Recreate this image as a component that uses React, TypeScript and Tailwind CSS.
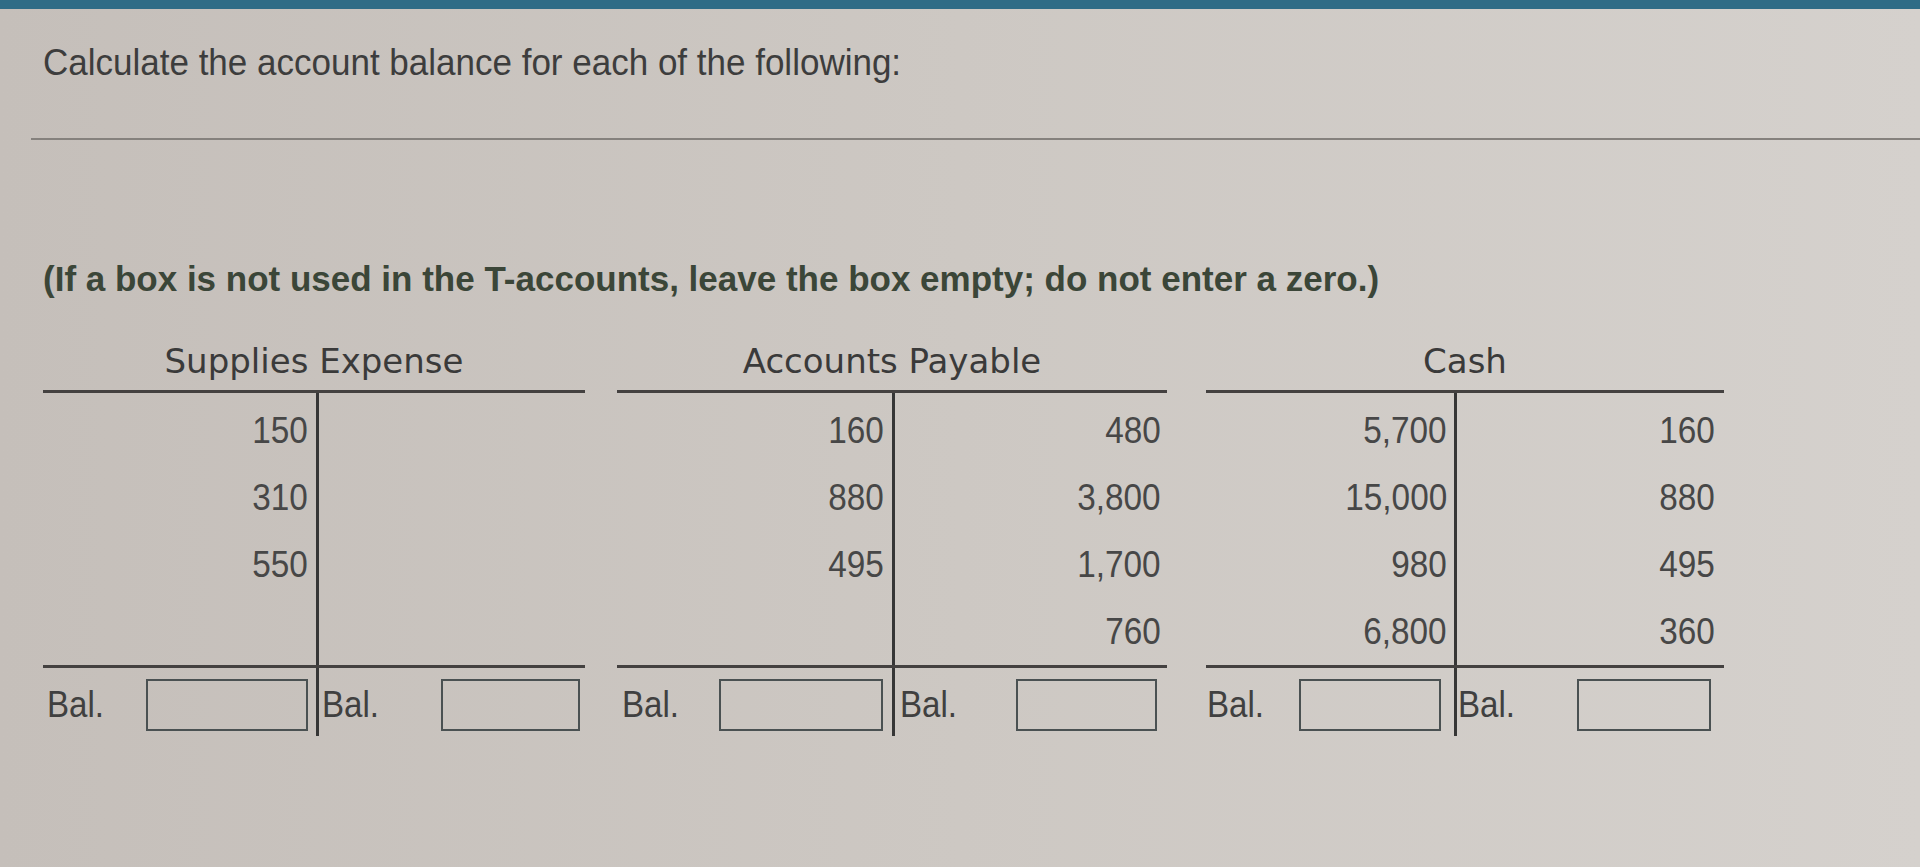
import React from "react";

// T-account layout data, one entry per account
type Side = {
  w: string;
  nums: string[];
  numPr: string;
  balPl: string;
  box: string;
  boxPr: string;
};

type Account = {
  title: string;
  wrap: string;
  left: Side;
  right: Side;
};

const accounts: Account[] = [
  {
    title: "Supplies Expense",
    wrap: "w-[542px]",
    left: { w: "w-[276px]", nums: ["150", "310", "550"], numPr: "pr-[8px]", balPl: "pl-[4px]", box: "w-[162px]", boxPr: "pr-[8px]" },
    right: { w: "w-[266px]", nums: [], numPr: "pr-[7px]", balPl: "pl-[3px]", box: "w-[139px]", boxPr: "pr-[5px]" },
  },
  {
    title: "Accounts Payable",
    wrap: "w-[550px]",
    left: { w: "w-[278px]", nums: ["160", "880", "495"], numPr: "pr-[8px]", balPl: "pl-[5px]", box: "w-[164px]", boxPr: "pr-[9px]" },
    right: { w: "w-[272px]", nums: ["480", "3,800", "1,700", "760"], numPr: "pr-[6px]", balPl: "pl-[5px]", box: "w-[141px]", boxPr: "pr-[10px]" },
  },
  {
    title: "Cash",
    wrap: "w-[518px]",
    left: { w: "w-[251px]", nums: ["5,700", "15,000", "980", "6,800"], numPr: "pr-[7px]", balPl: "pl-[1px]", box: "w-[142px]", boxPr: "pr-[13px]" },
    right: { w: "w-[267px]", nums: ["160", "880", "495", "360"], numPr: "pr-[9px]", balPl: "pl-[1px]", box: "w-[134px]", boxPr: "pr-[13px]" },
  },
];

function Column({ side, divider }: { side: Side; divider: boolean }) {
  const rows = [0, 1, 2, 3];
  return (
    <div className={`${side.w} pt-[4px] ${divider ? "border-r-[3px] border-[#363636]" : ""}`}>
      {rows.map((i) => (
        <div
          key={i}
          className={`h-[67px] text-right text-[37px] leading-[67px] text-[#474747] ${side.numPr}`}
        >
          <span className="inline-block origin-right scale-x-[0.9]">{side.nums[i] ?? ""}</span>
        </div>
      ))}
    </div>
  );
}

function BalCell({ side, divider }: { side: Side; divider: boolean }) {
  return (
    <div
      className={`${side.w} h-[68px] pt-[11px] flex justify-between ${side.balPl} ${side.boxPr} ${
        divider ? "border-r-[3px] border-[#363636]" : ""
      }`}
    >
      <span className="text-[36px] leading-[52px] text-[#404040]">
        <span className="inline-block origin-left scale-x-[0.92]">Bal.</span>
      </span>
      <div className={`${side.box} h-[52px] border-2 border-[#4a5152]`} />
    </div>
  );
}

function TAccount({ acc }: { acc: Account }) {
  return (
    <div className={acc.wrap}>
      <div className="h-[49px] text-center font-['DejaVu_Sans',sans-serif] text-[34px] leading-[40px] text-[#3a3a3a]">
        {acc.title}
      </div>
      <div className="flex border-t-[3px] border-[#444140]">
        <Column side={acc.left} divider />
        <Column side={acc.right} divider={false} />
      </div>
      <div className="flex border-t-[3px] border-[#444140]">
        <BalCell side={acc.left} divider />
        <BalCell side={acc.right} divider={false} />
      </div>
    </div>
  );
}

export default function App() {
  return (
    <div className="min-h-screen w-full bg-linear-to-r from-[#c5bfba] via-[#cdc8c3] to-[#d5d1cd] font-['Liberation_Sans',Arial,sans-serif]">
      {/* top bar of the browser frame */}
      <div className="h-[9px] bg-[#2f6c86]" />

      <div className="mt-[34px] pl-[43px] text-[37px] leading-[40px] text-[#3d3d3d]">
        <span className="inline-block origin-left scale-x-[0.946]">
          Calculate the account balance for each of the following:
        </span>
      </div>

      <div className="ml-[31px] mt-[55px] h-[2px] bg-[#85817d]" />

      <div className="mt-[119px] pl-[43px] text-[35px] font-bold leading-[40px] text-[#3b4638]">
        (If a box is not used in the T-accounts, leave the box empty; do not enter a zero.)
      </div>

      <div className="mt-[42px] flex pl-[43px]">
        <TAccount acc={accounts[0]} />
        <div className="w-[32px]" />
        <TAccount acc={accounts[1]} />
        <div className="w-[39px]" />
        <TAccount acc={accounts[2]} />
      </div>
    </div>
  );
}
